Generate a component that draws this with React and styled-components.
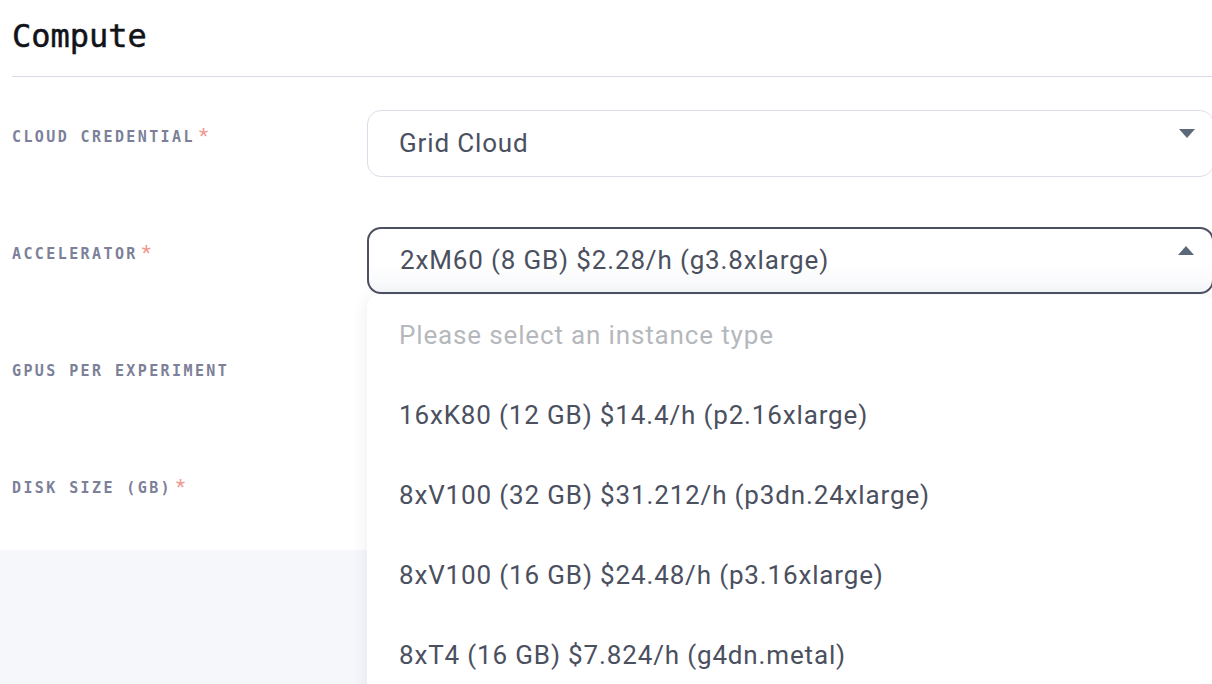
import React from "react";
import styled, { createGlobalStyle } from "styled-components";

const GlobalStyle = createGlobalStyle`
  html, body {
    margin: 0;
    padding: 0;
    background: #f6f7fb;
  }
  * { box-sizing: border-box; }
`;

export default function App() {
  const fields = [
    { label: "Cloud Credential", required: true, value: "Grid Cloud" },
    { label: "Accelerator", required: true, value: "2xM60 (8 GB) $2.28/h (g3.8xlarge)", open: true },
    { label: "GPUs per experiment", value: "1" },
    { label: "Disk size (GB)", required: true, value: "200" },
  ];

  const options = [
    "16xK80 (12 GB) $14.4/h (p2.16xlarge)",
    "8xV100 (32 GB) $31.212/h (p3dn.24xlarge)",
    "8xV100 (16 GB) $24.48/h (p3.16xlarge)",
    "8xT4 (16 GB) $7.824/h (g4dn.metal)",
  ];

  return (
    <Page>
      <GlobalStyle />
      <Panel>
        <Title>Compute</Title>
        <Divider />
        <Form>
          {fields.map((field) => (
            <Row key={field.label}>
              <Label>
                {field.label}
                {field.required && <Star>*</Star>}
              </Label>
              <Field>
                <SelectBox $open={field.open}>
                  <span>{field.value}</span>
                  <Caret $up={field.open} />
                </SelectBox>
                {field.open && (
                  <Menu>
                    <Option $placeholder>Please select an instance type</Option>
                    {options.map((opt) => (
                      <Option key={opt}>{opt}</Option>
                    ))}
                  </Menu>
                )}
              </Field>
            </Row>
          ))}
        </Form>
      </Panel>
    </Page>
  );
}

const Page = styled.main`
  height: 100vh;
  overflow: hidden;
  background: #f6f7fb;
`;

const Panel = styled.section`
  background: #ffffff;
  width: 1230px;
  padding: 16px 0 22px 12px;
`;

const Title = styled.h2`
  margin: 0;
  font-family: "DejaVu Sans Mono", "Liberation Mono", monospace;
  font-size: 32px;
  font-weight: 400;
  line-height: 40px;
  color: #111318;
  -webkit-text-stroke: 0.5px #111318;
`;

const Divider = styled.hr`
  margin: 20px 0 0;
  border: none;
  border-top: 1.5px solid #d9dce8;
  height: 0;
`;

const Form = styled.div`
  display: flex;
  flex-direction: column;
  gap: 50px;
  padding-top: 33px;
`;

const Row = styled.div`
  display: grid;
  grid-template-columns: 355px 847px;
  align-items: start;
`;

const Label = styled.label`
  display: flex;
  align-items: flex-start;
  padding-top: 18px;
  font-family: "DejaVu Sans Mono", "Liberation Mono", monospace;
  font-size: 15px;
  font-weight: 700;
  letter-spacing: 2.4px;
  line-height: 18px;
  text-transform: uppercase;
  color: #7c8098;
`;

const Star = styled.span`
  font-family: Roboto, "Noto Sans", sans-serif;
  font-size: 21px;
  font-weight: 400;
  letter-spacing: 0;
  line-height: 18px;
  color: #ee9a8f;
  margin-left: 4px;
  margin-top: -1px;
`;

const Field = styled.div`
  position: relative;
`;

const SelectBox = styled.div`
  height: 67px;
  display: flex;
  align-items: center;
  justify-content: space-between;
  padding: 0 18px 0 31px;
  border-radius: 14px;
  border: ${(p) => (p.$open ? "2px solid #4b5160" : "1.5px solid #dcdcea")};
  background: ${(p) =>
    p.$open ? "linear-gradient(#ffffff 55%, #f6f7fa)" : "#ffffff"};
  font-family: Roboto, "Noto Sans", sans-serif;
  font-size: 26px;
  letter-spacing: 0.85px;
  color: #4b505f;

  span {
    margin-top: -1px;
  }
`;

const Caret = styled.i`
  width: 0;
  height: 0;
  border-left: 8px solid transparent;
  border-right: 8px solid transparent;
  margin-top: -20px;
  ${(p) =>
    p.$up
      ? "border-bottom: 9px solid #5b6979;"
      : "border-top: 9px solid #5b6979;"}
`;

const Menu = styled.ul`
  position: absolute;
  top: 68px;
  left: 0;
  right: 0;
  margin: 0;
  padding: 0;
  list-style: none;
  background: #ffffff;
  border-radius: 12px 12px 0 0;
  box-shadow: 0 2px 16px rgba(60, 70, 110, 0.1);
  z-index: 2;
`;

const Option = styled.li`
  height: 80px;
  display: flex;
  align-items: center;
  padding-left: 32px;
  font-family: Roboto, "Noto Sans", sans-serif;
  font-size: 26px;
  letter-spacing: 0.85px;
  color: ${(p) => (p.$placeholder ? "#b5b8bc" : "#4b505f")};
`;
